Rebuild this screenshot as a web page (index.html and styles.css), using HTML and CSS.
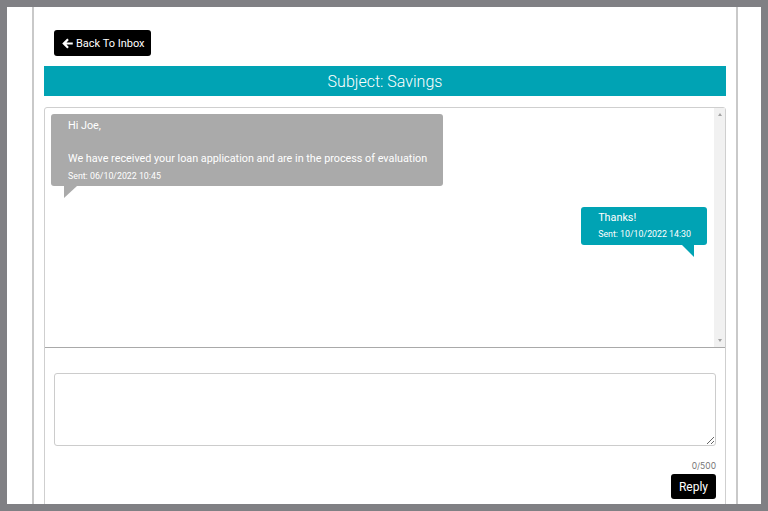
FILE: index.html
```html
<!DOCTYPE html>
<html lang="en">
<head>
<meta charset="utf-8">
<title>Subject: Savings</title>
<link rel="stylesheet" href="styles.css">
</head>
<body>
<div class="frame">
  <div class="container">
    <div class="top-row">
      <button class="btn btn-back" type="button">
        <svg class="icon-arrow" viewBox="0 0 10 10" width="11" height="11" aria-hidden="true"><path d="M0.2 5 L4.8 0.5 L6.2 1.9 L4.1 4 H9.8 V6 H4.1 L6.2 8.1 L4.8 9.5 Z" fill="#fff"/></svg>
        <span>Back To Inbox</span>
      </button>
    </div>
    <div class="subject">Subject: Savings</div>
    <div class="card">
      <div class="thread">
        <div class="messages">
          <div class="msg msg-in">
            <div class="msg-body">Hi Joe,<br><br>We have received your loan application and are in the process of evaluation</div>
            <div class="msg-sent">Sent: 06/10/2022 10:45</div>
          </div>
          <div class="msg msg-out">
            <div class="msg-body">Thanks!</div>
            <div class="msg-sent">Sent: 10/10/2022 14:30</div>
          </div>
        </div>
        <div class="scrollbar">
          <span class="sb-arrow sb-up"></span>
          <span class="sb-arrow sb-down"></span>
        </div>
      </div>
      <div class="compose">
        <textarea class="reply-input" aria-label="Reply"></textarea>
        <div class="counter">0/500</div>
        <div class="actions">
          <button class="btn btn-reply" type="button">Reply</button>
        </div>
      </div>
    </div>
  </div>
</div>
</body>
</html>
```
FILE: styles.css
```css
html, body {
  margin: 0;
  padding: 0;
}
body {
  background: #808084;
  font-family: Roboto, "Liberation Sans", Arial, sans-serif;
}
.frame {
  margin: 7px;
  height: 497px;
  background: #fff;
  overflow: hidden;
}
.container {
  margin-left: 25px;
  width: 682px;
  height: 100%;
  border-left: 2px solid #c9c9c9;
  border-right: 2px solid #c9c9c9;
  padding: 23px 10px 0 10px;
}
.top-row {
  display: flex;
  padding-left: 10px;
}
.btn {
  background: #000;
  color: #fff;
  border: 0;
  border-radius: 3px;
  font-family: Roboto, "Liberation Sans", sans-serif;
  font-size: 12px;
  white-space: nowrap;
  cursor: pointer;
}
.btn-back {
  height: 26px;
  width: 97px;
  padding: 0 0 0 8px;
  font-size: 11px;
  display: flex;
  align-items: center;
  gap: 3px;
}
.icon-arrow {
  display: block;
}
.subject {
  margin-top: 10px;
  height: 30px;
  background: #00a3b4;
  color: #fff;
  font-weight: 300;
  font-size: 16px;
  display: flex;
  align-items: center;
  justify-content: center;
}
.card {
  margin-top: 11px;
  border: 1px solid #cfcfcf;
  border-radius: 3px;
  height: 420px;
}
.thread {
  display: flex;
  height: 239px;
  border-bottom: 1px solid #a9a9a9;
}
.messages {
  flex: 1;
  padding: 6px 7px 0 6px;
  display: flex;
  flex-direction: column;
}
.msg {
  position: relative;
  color: #fff;
  border-radius: 3px;
  padding: 4px 16px 3px 17px;
}
.msg-body {
  font-size: 10.8px;
  line-height: 16.5px;
}
.msg-sent {
  margin-top: 2px;
  font-size: 8.8px;
  line-height: 13px;
}
.msg-in {
  align-self: flex-start;
  background: #aaaaaa;
}
.msg-in::after {
  content: "";
  position: absolute;
  left: 13px;
  top: 100%;
  border-top: 12px solid #aaaaaa;
  border-right: 13px solid transparent;
}
.msg-out {
  align-self: flex-end;
  margin-top: 21px;
  background: #00a3b4;
  padding-top: 3px;
  padding-bottom: 3.5px;
}
.msg-out::after {
  content: "";
  position: absolute;
  right: 13px;
  top: 100%;
  border-top: 12px solid #00a3b4;
  border-left: 12px solid transparent;
}
.scrollbar {
  width: 11px;
  background: #f1f1f1;
  display: flex;
  flex-direction: column;
  justify-content: space-between;
  align-items: center;
  padding: 5px 0;
}
.sb-arrow {
  width: 0;
  height: 0;
  border-left: 2.5px solid transparent;
  border-right: 2.5px solid transparent;
}
.sb-up {
  border-bottom: 3px solid #a3a3a3;
}
.sb-down {
  border-top: 3px solid #a3a3a3;
}
.compose {
  padding: 25px 9px 0 9px;
  display: flex;
  flex-direction: column;
}
.reply-input {
  display: block;
  height: 73px;
  box-sizing: border-box;
  border: 1px solid #cccccc;
  border-radius: 3px;
  resize: vertical;
  font-family: Roboto, sans-serif;
}
.counter {
  margin-top: 15px;
  text-align: right;
  font-family: Inter, Roboto, sans-serif;
  font-size: 8.5px;
  color: #777;
  line-height: 10px;
}
.actions {
  display: flex;
  justify-content: flex-end;
  margin-top: 3px;
}
.btn-reply {
  width: 45px;
  height: 25px;
  padding: 0;
}
```
